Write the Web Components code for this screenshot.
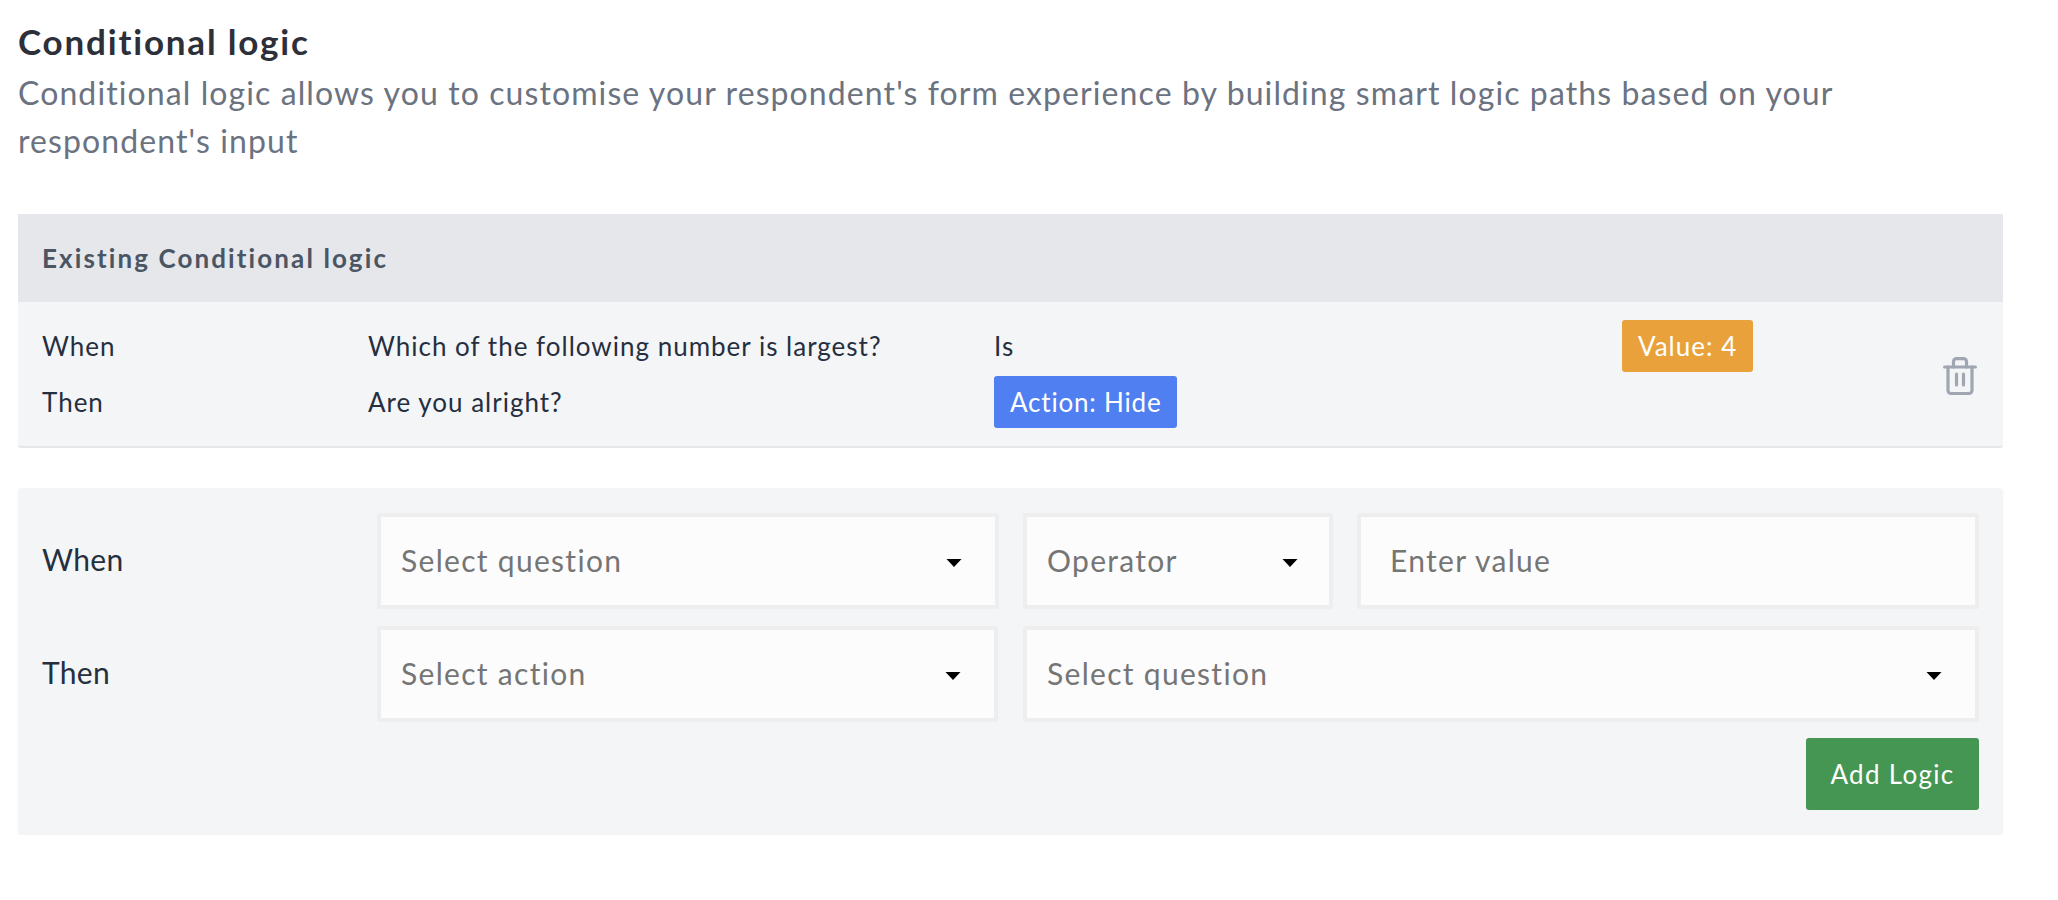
<!DOCTYPE html>
<html lang="en">
<head>
<meta charset="utf-8">
<title>Conditional logic</title>
<style>
    html, body { margin: 0; background: #fff; }
    body { font-family: "Lato", "Liberation Sans", sans-serif; }
</style>
</head>
<body>
<logic-page>
    <logic-heading slot="heading" title-text="Conditional logic">Conditional logic allows you to customise your respondent's form experience by building smart logic paths based on your respondent's input</logic-heading>
    <logic-list slot="list" title-text="Existing Conditional logic">
        <logic-row question="Which of the following number is largest?" then-question="Are you alright?" operator="Is" value="Value: 4" action="Action: Hide"></logic-row>
    </logic-list>
    <logic-form slot="form"></logic-form>
</logic-page>

<script>
class LogicPage extends HTMLElement {
    constructor() {
        super();
        this.attachShadow({ mode: 'open' });
        this.shadowRoot.innerHTML = `
            <style>
                :host { display: block; width: 1985px; padding: 23px 0 0 18px; }
                ::slotted(logic-list) { margin-top: 49px; }
                ::slotted(logic-form) { margin-top: 40px; }
            </style>
            <slot name="heading"></slot>
            <slot name="list"></slot>
            <slot name="form"></slot>
        `;
    }
}

class LogicHeading extends HTMLElement {
    constructor() {
        super();
        this.attachShadow({ mode: 'open' });
        this.shadowRoot.innerHTML = `
            <style>
                :host { display: block; }
                h2 {
                    margin: 0;
                    font-size: 35px;
                    line-height: 36px;
                    font-weight: 700;
                    letter-spacing: 1.8px;
                    color: #2d2f39;
                }
                p {
                    margin: 10px 0 0;
                    font-size: 32px;
                    line-height: 48px;
                    letter-spacing: 1.1px;
                    color: #6b7280;
                }
            </style>
            <h2></h2>
            <p><slot></slot></p>
        `;
        this.shadowRoot.querySelector('h2').textContent = this.getAttribute('title-text') || '';
    }
}

class LogicList extends HTMLElement {
    constructor() {
        super();
        this.attachShadow({ mode: 'open' });
        this.shadowRoot.innerHTML = `
            <style>
                :host { display: block; background: #f4f5f7; border-bottom: 2px solid #e5e7eb; border-radius: 0 0 3px 3px; }
                header {
                    height: 88px;
                    display: flex;
                    align-items: center;
                    padding: 0 24px;
                    background: #e5e7eb;
                    font-size: 26px;
                    font-weight: 700;
                    letter-spacing: 2.1px;
                    color: #4b5563;
                }
            </style>
            <header></header>
            <slot></slot>
        `;
        this.shadowRoot.querySelector('header').textContent = this.getAttribute('title-text') || '';
    }
}

class LogicBadge extends HTMLElement {
    constructor() {
        super();
        this.attachShadow({ mode: 'open' });
        this.shadowRoot.innerHTML = `
            <style>
                :host {
                    display: inline-flex;
                    align-items: center;
                    height: 52px;
                    padding: 0 16px;
                    border-radius: 3px;
                    font-size: 26px;
                    letter-spacing: var(--badge-spacing, 0.8px);
                    color: #fff;
                    background: var(--badge-bg, #4f7ff0);
                }
            </style>
            <slot></slot>
        `;
    }
}

class TrashIcon extends HTMLElement {
    constructor() {
        super();
        this.attachShadow({ mode: 'open' });
        this.shadowRoot.innerHTML = `
            <style>
                :host { display: block; width: 34px; height: 38px; margin-top: 3px; }
                svg { display: block; }
            </style>
            <svg width="34" height="38" viewBox="0 0 34 38" fill="none" stroke="#a0a6b2" stroke-width="3.2" stroke-linecap="round" stroke-linejoin="round">
                <path d="M1.6 10h30.8"/>
                <path d="M5 10v23.5a3 3 0 0 0 3 3h18a3 3 0 0 0 3-3V10"/>
                <path d="M10.5 10V4.6a3 3 0 0 1 3-3h7a3 3 0 0 1 3 3V10"/>
                <path d="M13.5 17v11M20.5 17v11"/>
            </svg>
        `;
    }
}

class LogicRow extends HTMLElement {
    constructor() {
        super();
        this.attachShadow({ mode: 'open' });
        const attr = name => this.getAttribute(name) || '';
        this.shadowRoot.innerHTML = `
            <style>
                :host {
                    display: flex;
                    align-items: center;
                    justify-content: space-between;
                    padding: 18px 26px 18px 24px;
                    font-size: 26px;
                    letter-spacing: 1px;
                    color: #252f3f;
                }
                .grid {
                    display: grid;
                    grid-template-columns: 326px 626px 628px 132px;
                    grid-auto-rows: 52px;
                    row-gap: 4px;
                    align-items: center;
                }
                logic-badge { justify-self: start; }
                .value { --badge-bg: #e9a23b; --badge-spacing: 1px; }
            </style>
            <div class="grid">
                <span>When</span>
                <span>${attr('question')}</span>
                <span>${attr('operator')}</span>
                <logic-badge class="value">${attr('value')}</logic-badge>
                <span>Then</span>
                <span>${attr('then-question')}</span>
                <logic-badge>${attr('action')}</logic-badge>
                <span></span>
            </div>
            <trash-icon></trash-icon>
        `;
    }
}

class LogicField extends HTMLElement {
    constructor() {
        super();
        this.attachShadow({ mode: 'open' });
    }

    connectedCallback() {
        const isSelect = this.hasAttribute('select');
        this.shadowRoot.innerHTML = `
            <style>
                :host {
                    display: flex;
                    align-items: center;
                    justify-content: space-between;
                    box-sizing: border-box;
                    height: 96px;
                    padding: 0 var(--field-right, 33px) 0 var(--field-left, 20px);
                    background: #fcfcfc;
                    border: 4px solid #eeeeee;
                    border-radius: 2px;
                    font-size: 30px;
                    letter-spacing: 1.3px;
                    color: #757575;
                }
                span { padding-bottom: 2px; }
                svg { display: block; margin-top: 4px; }
            </style>
            <span>${this.getAttribute('placeholder') || ''}</span>
            ${isSelect ? '<svg width="16" height="8" viewBox="0 0 16 8"><path d="M0.5 0h15L8 8z" fill="#000"/></svg>' : ''}
        `;
    }
}

class LogicButton extends HTMLElement {
    constructor() {
        super();
        this.attachShadow({ mode: 'open' });
        this.shadowRoot.innerHTML = `
            <style>
                :host {
                    display: inline-flex;
                    align-items: center;
                    justify-content: center;
                    width: 173px;
                    height: 72px;
                    border-radius: 3px;
                    background: #459652;
                    color: #fff;
                    font-size: 26px;
                    letter-spacing: 1.3px;
                    cursor: pointer;
                }
            </style>
            <slot></slot>
        `;
    }
}

class LogicForm extends HTMLElement {
    constructor() {
        super();
        this.attachShadow({ mode: 'open' });
        this.shadowRoot.innerHTML = `
            <style>
                :host {
                    display: block;
                    padding: 25px 24px;
                    background: #f4f5f7;
                    border-radius: 4px;
                    box-shadow: 0 1px 3px rgba(0, 0, 0, 0.04);
                    color: #252f3f;
                }
                .row {
                    display: grid;
                    align-items: center;
                    height: 96px;
                }
                .when { grid-template-columns: 335px 622px 24px 310px 24px 622px; }
                .then { grid-template-columns: 335px 621px 25px 956px; margin-top: 17px; }
                .label { font-size: 30px; letter-spacing: 0.3px; padding-bottom: 4px; }
                .op { --field-right: 31px; }
                .val { --field-left: 29px; }
                .actions { display: flex; justify-content: flex-end; margin-top: 16px; }
            </style>
            <div class="row when">
                <span class="label">When</span>
                <logic-field select placeholder="Select question"></logic-field>
                <span></span>
                <logic-field select class="op" placeholder="Operator"></logic-field>
                <span></span>
                <logic-field class="val" placeholder="Enter value"></logic-field>
            </div>
            <div class="row then">
                <span class="label">Then</span>
                <logic-field select placeholder="Select action"></logic-field>
                <span></span>
                <logic-field select placeholder="Select question"></logic-field>
            </div>
            <div class="actions"><logic-button>Add Logic</logic-button></div>
        `;
    }
}

customElements.define('logic-page', LogicPage);
customElements.define('logic-heading', LogicHeading);
customElements.define('logic-list', LogicList);
customElements.define('logic-badge', LogicBadge);
customElements.define('trash-icon', TrashIcon);
customElements.define('logic-row', LogicRow);
customElements.define('logic-field', LogicField);
customElements.define('logic-button', LogicButton);
customElements.define('logic-form', LogicForm);
</script>
</body>
</html>
